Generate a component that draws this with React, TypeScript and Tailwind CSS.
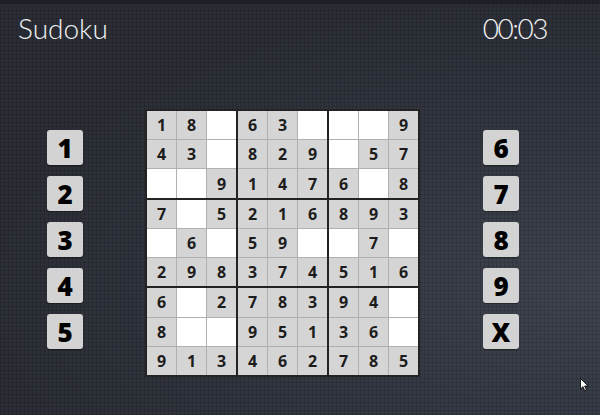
const board = [
  "18.63...9",
  "43.829.57",
  "..91476.8",
  "7.5216893",
  ".6.59..7.",
  "298374516",
  "6.278394.",
  "8..95136.",
  "913462785",
];

const leftKeys = ["1", "2", "3", "4", "5"];
const rightKeys = ["6", "7", "8", "9", "X"];

function Key({ label }: { label: string }) {
  return (
    <button className="flex h-[35px] w-[36px] items-center justify-center rounded-[3px] bg-[#d3d3d3] text-[26px] font-extrabold leading-none text-black shadow-[0_1px_1px_rgba(0,0,0,0.4)]">
      {label}
    </button>
  );
}

function Block({ br, bc }: { br: number; bc: number }) {
  const cells = [];
  for (let r = 0; r < 3; r++) {
    for (let c = 0; c < 3; c++) {
      const v = board[br * 3 + r][bc * 3 + c];
      cells.push(
        <div
          key={`${r}-${c}`}
          className={
            v === "."
              ? "bg-white"
              : "flex items-center justify-center bg-[#d5d5d5] text-[16px] font-bold text-[#1c1c1c]"
          }
        >
          {v === "." ? null : v}
        </div>
      );
    }
  }
  return (
    <div className="grid grid-cols-3 grid-rows-3 gap-px bg-[#b0b0b0]">
      {cells}
    </div>
  );
}

export default function App() {
  return (
    <div className="relative h-[415px] w-[600px] overflow-hidden bg-[#2a2d35] bg-[image:radial-gradient(ellipse_at_100%_70%,#40444f_0%,#343842_35%,transparent_75%)] font-['Open_Sans',sans-serif]">
      <div className="pointer-events-none absolute inset-0 bg-[image:repeating-linear-gradient(0deg,rgba(0,0,0,0.12)_0px,rgba(0,0,0,0.12)_1px,transparent_1px,transparent_4px),repeating-linear-gradient(90deg,rgba(0,0,0,0.12)_0px,rgba(0,0,0,0.12)_1px,transparent_1px,transparent_4px)]" />
      <div className="pointer-events-none absolute inset-x-0 top-0 h-[4px] bg-[#1e2026]" />

      <div className="relative">
        <header className="flex justify-between pl-[18px] pr-[53px] pt-[11px] font-['Lato',sans-serif] text-[28px] font-light leading-[34px] text-[#f2f2f2]">
          <h1>Sudoku</h1>
          <span className="tracking-[-1.5px]">00:03</span>
        </header>

        <main className="mt-[64px] flex items-start pl-[47px]">
          <div className="mt-[21px] flex flex-col gap-[11px]">
            {leftKeys.map((k) => (
              <Key key={k} label={k} />
            ))}
          </div>

          <div className="ml-[62px] grid h-[268px] w-[275px] grid-cols-3 grid-rows-3 gap-[2px] border-2 border-[#232323] bg-[#232323]">
            {[0, 1, 2].map((br) =>
              [0, 1, 2].map((bc) => <Block key={`${br}${bc}`} br={br} bc={bc} />)
            )}
          </div>

          <div className="ml-[63px] mt-[21px] flex flex-col gap-[11px]">
            {rightKeys.map((k) => (
              <Key key={k} label={k} />
            ))}
          </div>
        </main>
      </div>

      <svg
        className="absolute left-[580px] top-[378px]"
        width="9"
        height="14"
        viewBox="0 0 9 14"
      >
        <path
          d="M0.5 0.5 L0.5 11 L3 8.6 L4.8 12.8 L6.4 12.1 L4.6 8 L8 8 Z"
          fill="#fff"
          stroke="#000"
          strokeWidth="0.8"
        />
      </svg>
    </div>
  );
}
